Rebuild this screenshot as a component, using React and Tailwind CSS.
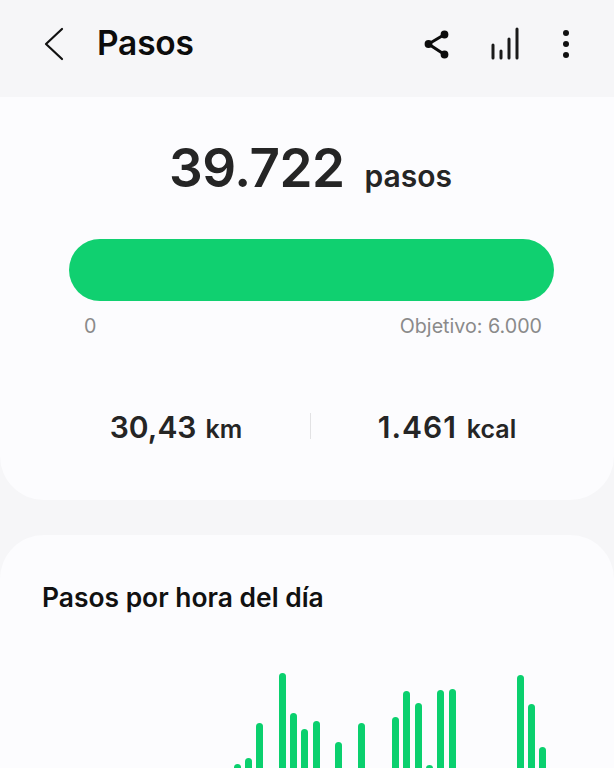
const hours = [
  [0, 764], [1, 758], [2, 723], [4, 673], [5, 713], [6, 729], [7, 721], [9, 742], [11, 723],
  [14, 717], [15, 691], [16, 703], [17, 765], [18, 690], [19, 689], [25, 675], [26, 704], [27, 747],
];
const slots = Array.from({ length: 28 }, (_, i) => {
  const f = hours.find((h) => h[0] === i);
  return f ? 800 - f[1] : 0;
});

export default function App() {
  return (
    <div className="h-[768px] w-[614px] overflow-hidden bg-[#f6f6f8] font-['Inter',sans-serif]">
      <header className="flex h-[97px] items-center pb-[10px] pl-[44px] pr-[43px]">
        <svg width="20" height="34" viewBox="0 0 20 34" fill="none" stroke="#111" strokeWidth="2.2" strokeLinecap="round" strokeLinejoin="round">
          <path d="M18 2 L2 17 L18 32" />
        </svg>
        <h1 className="ml-[33px] text-[33.5px] font-semibold tracking-[-0.2px] text-[#0c0c0c]">Pasos</h1>
        <div className="ml-auto flex items-center">
          <svg width="28" height="30" viewBox="0 0 28 30" fill="#0c0c0c" stroke="#0c0c0c" strokeWidth="3">
            <path d="M21.5 5.5 L5.5 15 L21.5 25.5" fill="none" />
            <circle cx="21.5" cy="5.5" r="2.4" />
            <circle cx="5.5" cy="15" r="2.4" />
            <circle cx="21.5" cy="25.5" r="2.4" />
          </svg>
          <svg className="ml-[39px]" width="32" height="34" viewBox="0 0 32 34" fill="none" stroke="#1a1a1a" strokeWidth="3" strokeLinecap="round">
            <path d="M3 18 V31 M11 24 V31 M19 12 V31 M27 2 V31" />
          </svg>
          <svg className="ml-[39px]" width="10" height="30" viewBox="0 0 10 30" fill="#111">
            <circle cx="5" cy="4" r="3" />
            <circle cx="5" cy="15" r="3" />
            <circle cx="5" cy="26" r="3" />
          </svg>
        </div>
      </header>

      <section className="h-[403px] rounded-b-[44px] bg-[#fcfcfe] pl-[69px] pr-[60px] pt-[38px]">
        <div className="flex items-baseline justify-center gap-[20px] pr-[2px] text-[#252525]">
          <span className="text-[53px] leading-[66px] font-semibold tracking-[-0.5px]">39.722</span>
          <span className="text-[30px] font-semibold">pasos</span>
        </div>
        <div className="mt-[38px] h-[62px] rounded-full bg-[#10d070]" />
        <div className="mt-[13px] flex justify-between pl-[15px] pr-[12px] text-[19.7px] leading-[24px] text-[#8a8a8a]">
          <span>0</span>
          <span>Objetivo: 6.000</span>
        </div>
        <div className="mt-[67px] flex items-center text-[#252525]">
          <div className="flex w-[241px] items-baseline justify-center gap-[9px] pr-[27px]">
            <span className="text-[30px] font-semibold">30,43</span>
            <span className="text-[25px] font-semibold">km</span>
          </div>
          <div className="h-[26px] w-px -translate-y-[2px] bg-[#e2e2e4]" />
          <div className="flex flex-1 items-baseline justify-center gap-[10px] pl-[29px]">
            <span className="text-[30px] font-semibold tracking-[1px]">1.461</span>
            <span className="text-[25px] font-semibold">kcal</span>
          </div>
        </div>
      </section>

      <section className="mt-[35px] h-[400px] rounded-t-[44px] bg-[#fcfcfe] pt-[45px]">
        <h2 className="pl-[42px] text-[26.4px] leading-[34px] font-semibold text-[#111]">Pasos por hora del día</h2>
        <div className="ml-[233.5px] mt-[59px] flex h-[127px] items-end gap-[4.33px]">
          {slots.map((h, i) =>
            <div key={i} className="w-[7px] shrink-0 rounded-t-full bg-[#0ad06e]" style={{ height: h }} />
          )}
        </div>
      </section>
    </div>
  );
}
